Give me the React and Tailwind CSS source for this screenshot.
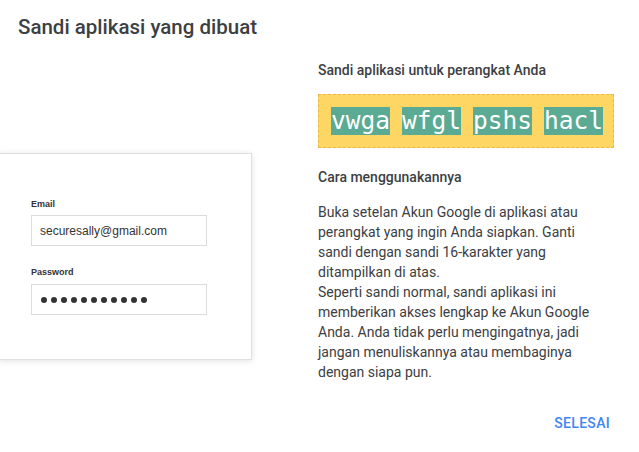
export default function App() {
  const words = ['vwga', 'wfgl', 'pshs', 'hacl']
  return (
    <div className="w-[639px] h-[452px] bg-white overflow-hidden font-['Roboto',sans-serif] text-[#3c4043]">
      <h1 className="pl-[18px] pt-[14px] text-[20.5px] leading-[26px] font-medium text-[#3c4043]">
        Sandi aplikasi yang dibuat
      </h1>

      <div className="flex mt-[20px]">
        {/* left: illustration card */}
        <div className="w-[318px] shrink-0 pt-[93px]">
          <div className="ml-[-2px] w-[254px] h-[207px] bg-white border border-[#e0e0e0] shadow-[0_1px_6px_rgba(0,0,0,0.12)] pl-[32px] pt-[44px] font-['Liberation_Sans',sans-serif]">
            <div className="text-[9px] font-bold text-[#333] leading-[12px]">Email</div>
            <div className="mt-[5px] w-[176px] h-[31px] border border-[#dcdcdc] flex items-center pl-[8px] text-[12px] text-[#333]">
              securesally@gmail.com
            </div>
            <div className="mt-[20px] text-[9px] font-bold text-[#333] leading-[12px]">Password</div>
            <div className="mt-[6px] w-[176px] h-[31px] border border-[#dcdcdc] flex items-center pl-[9px] gap-[4px]">
              {Array.from({ length: 11 }).map((_, i) => (
                <span key={i} className="w-[6px] h-[6px] rounded-full bg-[#333]" />
              ))}
            </div>
          </div>
        </div>

        {/* right: password + instructions */}
        <div className="w-[296px]">
          <div className="text-[14px] font-medium leading-[20px]">Sandi aplikasi untuk perangkat Anda</div>
          <div className="mt-[14px] h-[54px] bg-[#fdd663] border border-dashed border-[#e6b94a] flex items-center pl-[12px] gap-[12px]">
            {words.map((w) => (
              <span
                key={w}
                className="bg-[#5aaa94] text-white h-[28px] leading-[28px] text-[24.5px] font-['DejaVu_Sans_Mono',monospace]"
              >
                {w}
              </span>
            ))}
          </div>
          <div className="mt-[19px] text-[14px] font-medium leading-[20px]">Cara menggunakannya</div>
          <p className="mt-[15px] w-[288px] text-[14px] leading-[20px]">
            Buka setelan Akun Google di aplikasi atau perangkat yang ingin Anda siapkan. Ganti sandi dengan sandi 16-karakter yang ditampilkan di atas.
            <br />
            Seperti sandi normal, sandi aplikasi ini memberikan akses lengkap ke Akun Google Anda. Anda tidak perlu mengingatnya, jadi jangan menuliskannya atau membaginya dengan siapa pun.
          </p>
          <div className="mt-[31px] flex justify-end pr-[4px]">
            <span className="text-[14px] font-medium text-[#4285f4] tracking-[0.3px]">SELESAI</span>
          </div>
        </div>
      </div>
    </div>
  )
}
